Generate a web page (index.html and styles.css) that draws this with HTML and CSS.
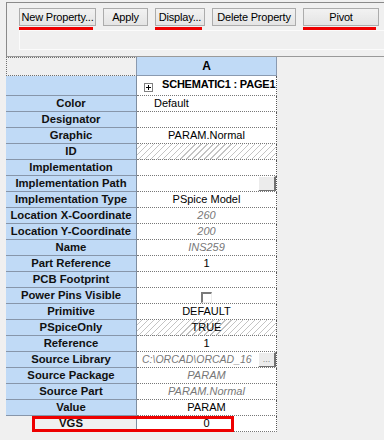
FILE: index.html
```html
<!DOCTYPE html>
<html>
<head>
<meta charset="utf-8">
<link rel="stylesheet" href="styles.css">
</head>
<body>
<div class="toolbar">
  <div class="buttons">
    <button class="btn b-new marked">New Property...</button>
    <button class="btn b-apply">Apply</button>
    <button class="btn b-display marked">Display...</button>
    <button class="btn b-delete">Delete Property</button>
    <button class="btn b-pivot marked">Pivot</button>
  </div>
  <div class="inputbar"></div>
</div>
<div class="sheet">
  <div class="corner"></div><div class="colhead">A</div>

  <div class="rh first"></div>
  <div class="cell first"><span class="plus"><svg width="9" height="9" viewBox="0 0 9 9"><rect x="0.5" y="0.5" width="8" height="8" fill="#fff" stroke="#808080"/><path d="M2 4.5h5M4.5 2v5" stroke="#000" stroke-width="1"/></svg></span><b class="title">SCHEMATIC1 : PAGE1</b></div>

  <div class="rh">Color</div><div class="cell left">Default</div>
  <div class="rh">Designator</div><div class="cell"></div>
  <div class="rh">Graphic</div><div class="cell">PARAM.Normal</div>
  <div class="rh">ID</div><div class="cell hatch"></div>
  <div class="rh">Implementation</div><div class="cell"></div>
  <div class="rh">Implementation Path</div><div class="cell"><span class="ell"></span></div>
  <div class="rh">Implementation Type</div><div class="cell">PSpice Model</div>
  <div class="rh">Location X-Coordinate</div><div class="cell dim">260</div>
  <div class="rh">Location Y-Coordinate</div><div class="cell dim">200</div>
  <div class="rh">Name</div><div class="cell dim">INS259</div>
  <div class="rh">Part Reference</div><div class="cell">1</div>
  <div class="rh">PCB Footprint</div><div class="cell"></div>
  <div class="rh">Power Pins Visible</div><div class="cell"><span class="check"></span></div>
  <div class="rh">Primitive</div><div class="cell">DEFAULT</div>
  <div class="rh">PSpiceOnly</div><div class="cell hatch">TRUE</div>
  <div class="rh">Reference</div><div class="cell">1</div>
  <div class="rh">Source Library</div><div class="cell dim lib"><span class="libtext">C:\ORCAD\ORCAD_16</span><span class="ell dots">...</span></div>
  <div class="rh">Source Package</div><div class="cell dim">PARAM</div>
  <div class="rh">Source Part</div><div class="cell dim">PARAM.Normal</div>
  <div class="rh">Value</div><div class="cell">PARAM</div>
  <div class="rh vgs"><span class="redbox"></span>VGS</div><div class="cell vgsval">0</div>
</div>
</body>
</html>
```
FILE: styles.css
```css
html, body {
  margin: 0;
  padding: 0;
  background: #f0f0f0;
  width: 384px;
  height: 440px;
  overflow: hidden;
  font-family: "Liberation Sans", Arial, sans-serif;
  font-size: 11px;
  color: #000;
}

.toolbar {
  margin: 2px 0 0 6px;
  height: 55px;
  box-sizing: border-box;
  border-top: 1px solid #8a8a8a;
  border-left: 1px solid #8a8a8a;
  border-bottom: 1px solid #9a9a9a;
  background: #f0f0f0;
  padding: 5px 0 0 12px;
}

.buttons {
  display: flex;
  gap: 7px;
  height: 18px;
}

.btn {
  position: relative;
  height: 18px;
  box-sizing: border-box;
  padding: 0;
  border: 1px solid #acacac;
  background: linear-gradient(#f2f2f2, #e4e4e4);
  font-family: "Liberation Sans", Arial, sans-serif;
  font-size: 11px;
  letter-spacing: -0.2px;
  color: #000;
  line-height: 16px;
}

.b-new { width: 77px; }
.b-apply { width: 45px; }
.b-display { width: 50px; }
.b-delete { width: 84px; }
.b-pivot { width: 76px; }

.marked::after {
  content: "";
  position: absolute;
  left: -1px;
  right: 2px;
  top: 18px;
  height: 3px;
  background: #ee0000;
}

.inputbar {
  margin: 4px 0 0 0;
  height: 20px;
  box-sizing: border-box;
  border: 1px solid #fbfbfb;
  border-right: none;
}

.sheet {
  margin-left: 6px;
  display: grid;
  grid-template-columns: 131px 140px;
  grid-template-rows: 19px 20px repeat(21, 16px);
}

.corner {
  border: 1px dotted #707070;
  border-right: 1px solid #8a9ab0;
  background: #f0f0f0;
  box-sizing: border-box;
}

.colhead {
  background: #c0daf6;
  border-right: 1px solid #8a9ab0;
  border-bottom: 1px solid #8a9ab0;
  box-sizing: border-box;
  font-weight: bold;
  font-size: 12px;
  text-align: center;
  line-height: 18px;
}

.rh {
  position: relative;
  background: #c0daf6;
  border-bottom: 1px solid #8796aa;
  border-right: 1px solid #7f8ea0;
  box-sizing: border-box;
  font-weight: bold;
  font-size: 11.3px;
  text-align: center;
  line-height: 15px;
  color: #111;
  white-space: nowrap;
}

.cell {
  position: relative;
  background: #fff;
  border-bottom: 1px dotted #777;
  border-right: 1px dotted #555;
  box-sizing: border-box;
  text-align: center;
  line-height: 15px;
  white-space: nowrap;
  overflow: hidden;
}

.cell.first {
  text-align: left;
  display: flex;
  align-items: flex-start;
  line-height: 14px;
}

.plus {
  display: block;
  margin: 7px 0 0 7px;
  width: 9px;
  height: 9px;
}
.plus svg { display: block; }

.title {
  margin: 1px 0 0 9px;
  font-size: 11px;
  letter-spacing: -0.2px;
  white-space: nowrap;
}

.cell.left {
  text-align: left;
  padding-left: 17px;
}

.dim {
  color: #777;
  font-style: italic;
}

.hatch {
  background: repeating-linear-gradient(135deg, #fff 0 3.2px, #c4c4c4 3.2px 4.2px);
}

.ell {
  position: absolute;
  right: 0;
  top: 0;
  width: 18px;
  height: 16px;
  box-sizing: border-box;
  background: #ececec;
  border-top: 1px solid #fff;
  border-left: 1px solid #fff;
  border-right: 2px solid #707070;
  border-bottom: 2px solid #707070;
  font-style: normal;
  font-size: 9px;
  line-height: 12px;
  color: #888;
  text-align: center;
}

.lib { text-align: left; }
.libtext {
  display: inline-block;
  padding-left: 5px;
  font-size: 10.5px;
}

.check {
  display: inline-block;
  width: 11px;
  height: 11px;
  margin-top: 4px;
  box-sizing: border-box;
  border-top: 2px solid #7a7a7a;
  border-left: 2px solid #7a7a7a;
  border-right: 1px solid #eee;
  border-bottom: 1px solid #eee;
  background: #fff;
  vertical-align: top;
}

.rh.vgs {
  background: #f0f0f0;
  border-bottom: none;
}

.redbox {
  position: absolute;
  left: 26px;
  top: 0;
  width: 202px;
  height: 16px;
  box-sizing: border-box;
  border: 3px solid #ee0000;
  z-index: 2;
  pointer-events: none;
}

.vgsval {
  border-bottom: 1px dotted #777;
}
```
